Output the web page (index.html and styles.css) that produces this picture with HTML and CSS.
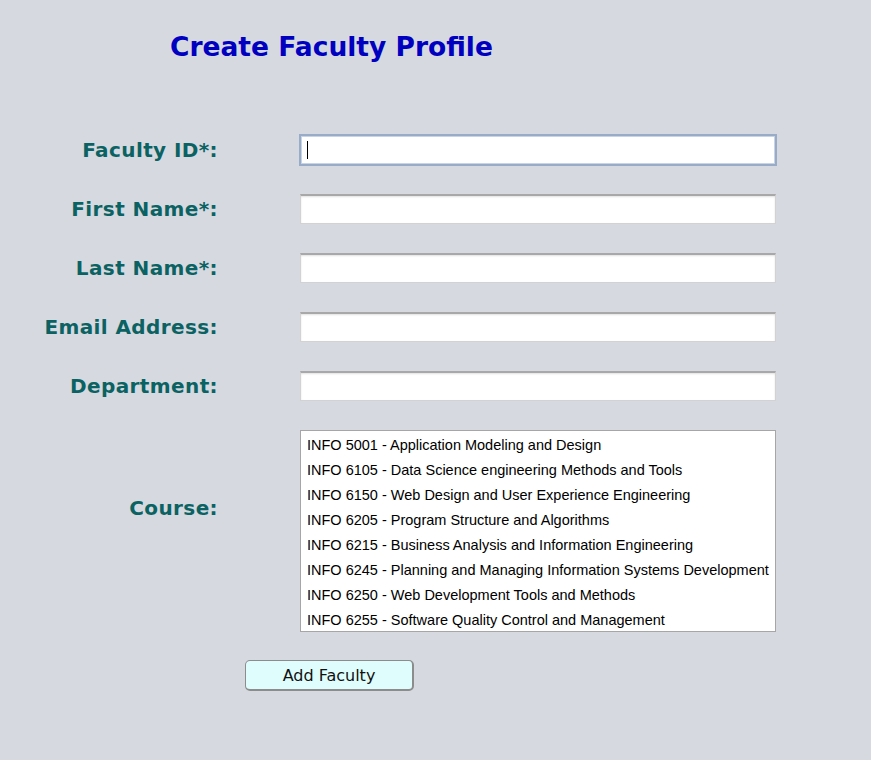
FILE: index.html
```html
<!DOCTYPE html>
<html>
<head>
<meta charset="utf-8">
<link rel="stylesheet" href="styles.css">
</head>
<body>
<div class="page">
  <h1 class="title">Create Faculty Profile</h1>
  <div class="form">
    <div class="label">Faculty ID*:</div>
    <div class="field focused"><span class="caret"></span></div>
    <div class="label">First Name*:</div>
    <div class="field"></div>
    <div class="label">Last Name*:</div>
    <div class="field"></div>
    <div class="label">Email Address:</div>
    <div class="field"></div>
    <div class="label">Department:</div>
    <div class="field"></div>
    <div class="label course-label">Course:</div>
    <div class="list">
      <div class="item">INFO 5001 - Application Modeling and Design</div>
      <div class="item">INFO 6105 - Data Science engineering Methods and Tools</div>
      <div class="item">INFO 6150 - Web Design and User Experience Engineering</div>
      <div class="item">INFO 6205 - Program Structure and Algorithms</div>
      <div class="item">INFO 6215 - Business Analysis and Information Engineering</div>
      <div class="item">INFO 6245 - Planning and Managing Information Systems Development</div>
      <div class="item">INFO 6250 - Web Development Tools and Methods</div>
      <div class="item">INFO 6255 - Software Quality Control and Management</div>
    </div>
  </div>
  <button class="btn">Add Faculty</button>
</div>
</body>
</html>
```
FILE: styles.css
```css
html, body {
  margin: 0;
  padding: 0;
  background: #d6d9e0;
}
.page {
  width: 871px;
  height: 760px;
  box-sizing: border-box;
  padding-top: 30px;
}
.title {
  margin: 0 0 0 170px;
  font-family: "DejaVu Sans", Verdana, sans-serif;
  font-weight: bold;
  font-size: 26.5px;
  line-height: 34px;
  color: #0000c0;
}
.form {
  display: grid;
  grid-template-columns: 218px 476px;
  column-gap: 82px;
  row-gap: 29px;
  margin-top: 71px;
}
.label {
  text-align: right;
  font-family: "DejaVu Sans", Verdana, sans-serif;
  font-weight: bold;
  font-size: 20px;
  letter-spacing: 0.4px;
  line-height: 30px;
  color: #0b6262;
}
.field {
  height: 30px;
  box-sizing: border-box;
  background: #fff;
  border: 1px solid #d2d2d2;
  border-top: 2px solid #a8a8a8;
  box-shadow: inset 0 1px 2px rgba(0,0,0,0.12);
  display: flex;
  align-items: center;
}
.field.focused {
  height: 32px;
  margin: -1px -1px -1px -1px;
  border: 2px solid #98acc8;
  box-shadow: inset 0 0 0 1px #c8d4e6;
  padding-left: 6px;
}
.caret {
  width: 1px;
  height: 18px;
  background: #000;
}
.course-label {
  align-self: start;
  margin-top: 63px;
}
.list {
  height: 202px;
  box-sizing: border-box;
  background: #fff;
  border: 1px solid #a6a6a6;
  padding: 2px 0 0 6px;
  font-family: "Liberation Sans", Arial, sans-serif;
  font-size: 14.5px;
  color: #000;
}
.item {
  line-height: 25px;
  white-space: nowrap;
}
.btn {
  display: block;
  margin: 28px 0 0 245px;
  width: 169px;
  height: 31px;
  background: #e0fdfd;
  border: 1px solid #8c8c8c;
  border-bottom-width: 2px;
  border-right-width: 2px;
  border-radius: 5px;
  font-family: "DejaVu Sans", Tahoma, sans-serif;
  font-size: 16px;
  color: #111;
  padding: 0;
}
```
